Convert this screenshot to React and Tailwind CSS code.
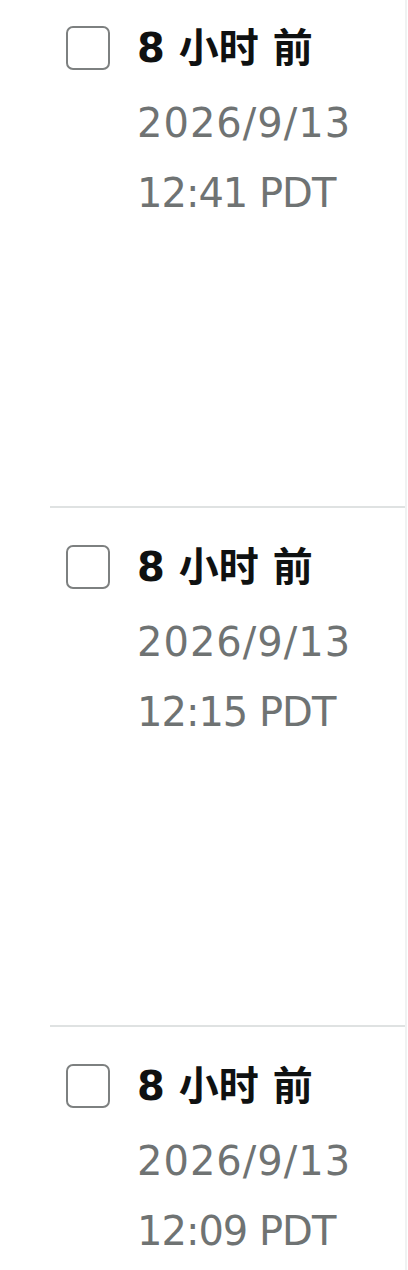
import React from 'react';

const rows = [
  { id: 1, ago: '8 小时 前', date: '2026/9/13', time: '12:41 PDT' },
  { id: 2, ago: '8 小时 前', date: '2026/9/13', time: '12:15 PDT' },
  { id: 3, ago: '8 小时 前', date: '2026/9/13', time: '12:09 PDT' },
];

const font = { fontFamily: '"DejaVu Sans", "Noto Sans CJK SC", sans-serif' };

function Row({ row, first }) {
  return (
    <div
      className={
        first
          ? 'h-[506px] pt-[26px] pl-[16px] flex items-start'
          : 'h-[519px] pt-[37px] pl-[16px] flex items-start border-t-2 border-[#dfe2e2]'
      }
    >
      <div className="w-[44px] h-[44px] shrink-0 rounded-[7px] border-2 border-[#7d8080] bg-white" />
      <div className="ml-[27px] flex flex-col" style={font}>
        <div className="text-[40px] leading-[44px] font-bold text-[#0f1111] whitespace-nowrap">
          {row.ago}
        </div>
        <div className="mt-[19px] text-[40px] leading-[68px] tracking-[1px] text-[#6f7373] whitespace-nowrap">
          {row.date}
        </div>
        <div className="mt-[2px] text-[40px] leading-[68px] tracking-[-1px] text-[#6f7373] whitespace-nowrap">
          {row.time}
        </div>
      </div>
    </div>
  );
}

export default function App() {
  return (
    <div className="w-[408px] h-[1270px] bg-white overflow-hidden">
      <div className="ml-[50px] w-[357px] h-full border-r-2 border-[#f0f2f2]">
        {rows.map((row, i) => (
          <Row key={row.id} row={row} first={i === 0} />
        ))}
      </div>
    </div>
  );
}
